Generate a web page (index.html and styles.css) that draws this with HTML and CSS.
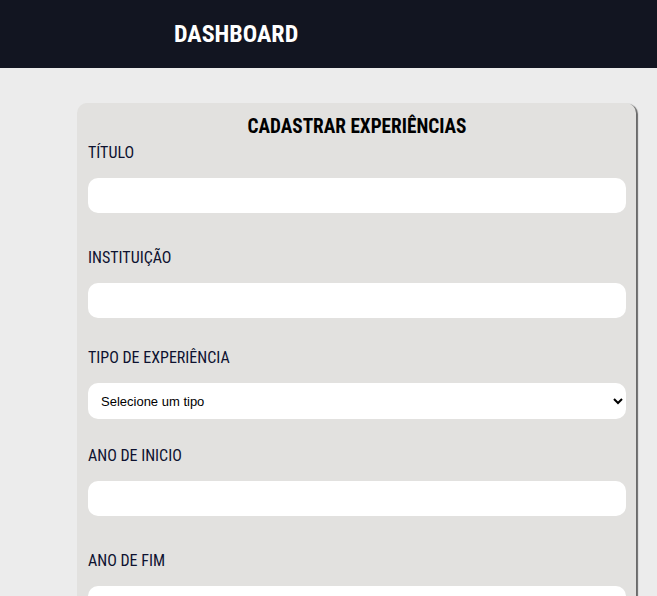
FILE: index.html
```html
<!DOCTYPE html>
<html lang="pt-BR">
<head>
<meta charset="utf-8">
<title>Dashboard</title>
<link rel="stylesheet" href="styles.css">
</head>
<body>
<header class="topbar">
  <h1 class="brand">DASHBOARD</h1>
</header>
<main class="content">
  <form class="card">
    <h2 class="card-title">CADASTRAR EXPERIÊNCIAS</h2>
    <label class="field-label" for="titulo">TÍTULO</label>
    <input class="field-input" id="titulo" type="text">
    <label class="field-label" for="instituicao">INSTITUIÇÃO</label>
    <input class="field-input field-input--tight" id="instituicao" type="text">
    <label class="field-label" for="tipo">TIPO DE EXPERIÊNCIA</label>
    <select class="field-select" id="tipo">
      <option>Selecione um tipo</option>
    </select>
    <label class="field-label" for="inicio">ANO DE INICIO</label>
    <input class="field-input" id="inicio" type="text">
    <label class="field-label" for="fim">ANO DE FIM</label>
    <input class="field-input" id="fim" type="text">
  </form>
</main>
</body>
</html>
```
FILE: styles.css
```css
html, body {
  margin: 0;
  padding: 0;
}
body {
  background: #ececec;
  font-family: "Roboto Condensed", "Liberation Sans Narrow", "DejaVu Sans Condensed", Roboto, sans-serif;
  font-stretch: condensed;
  color: #111;
}
.topbar {
  background: #121521;
  height: 68px;
  display: flex;
  align-items: center;
  padding-left: 174px;
  box-sizing: border-box;
}
.brand {
  margin: 0;
  color: #fff;
  font-size: 24px;
  font-weight: 700;
  line-height: 1;
}
.content {
  padding: 35px 21px 40px 77px;
}
.card {
  background: #e2e1df;
  border-radius: 10px;
  box-shadow: 2px 1px 1px rgba(0, 0, 0, 0.55);
  padding: 12px 10px 20px 11px;
  display: flex;
  flex-direction: column;
}
.card-title {
  margin: 0 0 3px 0;
  text-align: center;
  font-size: 19.3px;
  line-height: 24px;
  font-weight: 700;
  color: #000;
}
.field-label {
  display: block;
  font-size: 16px;
  line-height: 20px;
  margin-bottom: 16px;
  padding-top: 1px;
  color: #0e1230;
}
.field-input {
  height: 35px;
  border: none;
  border-radius: 10px;
  background: #fff;
  margin: -1px 0 34px 0;
  padding: 0 12px;
  box-sizing: border-box;
}
.field-input--tight {
  margin-bottom: 29px;
}
.field-select {
  height: 36px;
  border: none;
  border-radius: 10px;
  background: #fff;
  margin: -1px 0 26px 0;
  padding: 0 9px;
  font-family: "Liberation Sans", Arial, sans-serif;
  font-size: 13px;
  color: #000;
  box-sizing: border-box;
}
```
